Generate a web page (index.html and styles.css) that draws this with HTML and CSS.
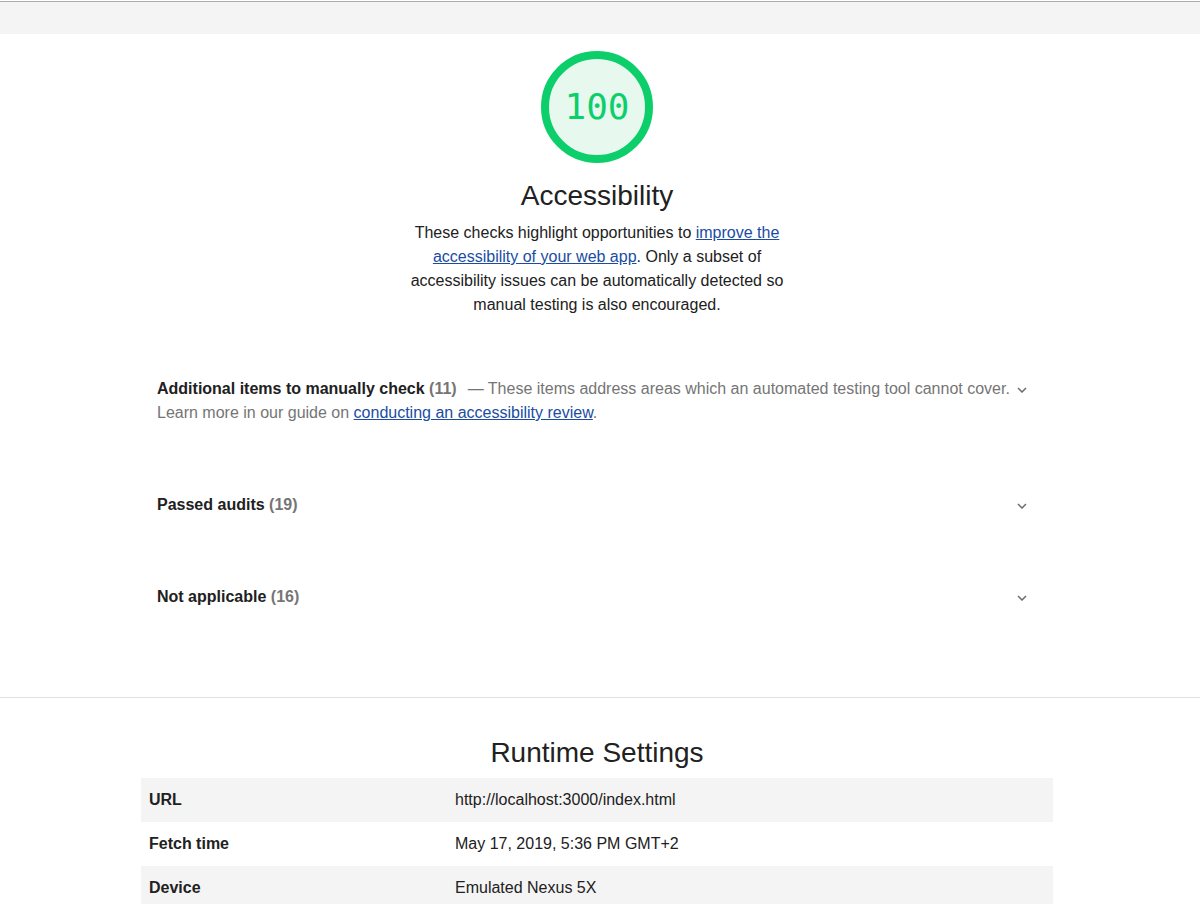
FILE: index.html
```html
<!DOCTYPE html>
<html>
<head>
<meta charset="utf-8">
<link rel="stylesheet" href="styles.css">
</head>
<body>
<div class="topbar"></div>
<div class="page">
  <div class="category">
    <div class="cat-header">
      <svg class="gauge" width="120" height="120" viewBox="0 0 120 120">
        <circle cx="60" cy="60" r="52" fill="#e7f9ef" stroke="#0ccf6b" stroke-width="8"/>
      </svg>
      <div class="gauge-value">100</div>
      <h1 class="cat-title">Accessibility</h1>
      <p class="cat-desc">These checks highlight opportunities to <a href="#">improve the accessibility of your web app</a>. Only a subset of accessibility issues can be automatically detected so manual testing is also encouraged.</p>
    </div>
    <div class="groups">
      <div class="group group-first">
        <div class="group-text"><span class="g-title">Additional items to manually check</span> <span class="g-count">(11)</span><span class="g-desc">— These items address areas which an automated testing tool cannot cover. Learn more in our guide on <a href="#">conducting an accessibility review</a>.</span></div>
        <div class="chev"><svg width="10" height="6" viewBox="0 0 10 6"><polyline points="1,1 5,5 9,1" fill="none" stroke="#6b6b6b" stroke-width="1.5"/></svg></div>
      </div>
      <div class="group">
        <div class="group-text"><span class="g-title">Passed audits</span> <span class="g-count">(19)</span></div>
        <div class="chev"><svg width="10" height="6" viewBox="0 0 10 6"><polyline points="1,1 5,5 9,1" fill="none" stroke="#6b6b6b" stroke-width="1.5"/></svg></div>
      </div>
      <div class="group">
        <div class="group-text"><span class="g-title">Not applicable</span> <span class="g-count">(16)</span></div>
        <div class="chev"><svg width="10" height="6" viewBox="0 0 10 6"><polyline points="1,1 5,5 9,1" fill="none" stroke="#6b6b6b" stroke-width="1.5"/></svg></div>
      </div>
    </div>
  </div>
</div>
<div class="divider"></div>
<div class="page">
  <div class="runtime">
    <h2 class="rt-title">Runtime Settings</h2>
    <table class="rt-table">
      <tr class="odd"><td class="k">URL</td><td class="v">http://localhost:3000/index.html</td></tr>
      <tr><td class="k">Fetch time</td><td class="v">May 17, 2019, 5:36 PM GMT+2</td></tr>
      <tr class="odd"><td class="k">Device</td><td class="v">Emulated Nexus 5X</td></tr>
    </table>
  </div>
</div>
</body>
</html>
```

FILE: styles.css
```css
html, body {
  margin: 0;
  padding: 0;
  background: #fff;
  font-family: "Liberation Sans", Arial, Helvetica, sans-serif;
  color: #212121;
  font-size: 16px;
  line-height: 24px;
}
.topbar {
  margin-top: 1px;
  height: 32px;
  border-top: 1px solid #acacac;
  background: #f4f4f4;
}
.page {
  width: 1194px;
  display: flex;
  justify-content: center;
}
.category {
  width: 912px;
}
.cat-header {
  display: flex;
  flex-direction: column;
  align-items: center;
}
.gauge {
  display: block;
  margin-top: 13px;
}
.gauge-value {
  margin-top: -120px;
  height: 120px;
  line-height: 120px;
  font-family: "DejaVu Sans Mono", "Liberation Mono", monospace;
  font-size: 36px;
  color: #0ccf6b;
  text-align: center;
  width: 120px;
}
.cat-title {
  margin: 11px 0 0;
  font-size: 28px;
  line-height: 36px;
  font-weight: normal;
  color: #212121;
}
.cat-desc {
  margin: 7px 0 0;
  max-width: 400px;
  text-align: center;
  font-size: 16px;
  line-height: 24px;
}
a {
  color: #1a4ca3;
  text-decoration: underline;
}
.groups {
  padding: 0 16px;
  margin-top: 60px;
}
.group {
  display: flex;
  align-items: flex-start;
  margin-top: 68px;
}
.group-first {
  margin-top: 0;
}
.group-text {
  flex: 1;
  min-width: 0;
}
.g-title {
  font-weight: bold;
  color: #212121;
}
.g-count {
  font-weight: bold;
  color: #757575;
}
.g-desc {
  color: #757575;
  margin-left: 11px;
}
.chev {
  width: 20px;
  height: 24px;
  margin-right: 5px;
  display: flex;
  align-items: center;
  justify-content: center;
  padding-top: 2px;
  box-sizing: border-box;
}
.chev svg {
  display: block;
}
.divider {
  margin-top: 88px;
  height: 1px;
  background: #e2e2e2;
}
.runtime {
  width: 912px;
}
.rt-title {
  margin: 37px 0 0;
  font-size: 28px;
  line-height: 36px;
  font-weight: normal;
  text-align: center;
  color: #212121;
}
.rt-table {
  margin-top: 7px;
  width: 912px;
  border-collapse: collapse;
  table-layout: fixed;
}
.rt-table td {
  height: 44px;
  padding: 0 8px;
  box-sizing: border-box;
  font-size: 16px;
  line-height: 24px;
  vertical-align: middle;
}
.rt-table tr.odd td {
  background: #f4f4f4;
}
.rt-table td.k {
  width: 306px;
  font-weight: bold;
}
```
